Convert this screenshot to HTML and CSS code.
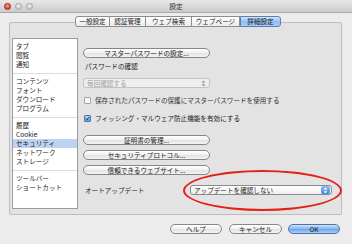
FILE: index.html
```html
<!DOCTYPE html>
<html lang="ja">
<head>
<meta charset="utf-8">
<title>設定</title>
<link rel="stylesheet" href="styles.css">
</head>
<body>
<div class="window">
  <div class="titlebar">
    <div class="lights"><span class="light red"></span><span class="light"></span><span class="light"></span></div>
    <div class="title">設定</div>
    <div></div>
  </div>
  <div class="tabs">
    <span class="tab t1">一般設定</span>
    <span class="tab t2">認証管理</span>
    <span class="tab t3">ウェブ検索</span>
    <span class="tab t4">ウェブページ</span>
    <span class="tab t5 selected">詳細設定</span>
  </div>
  <div class="panel">
    <div class="list">
      <div class="item">タブ</div>
      <div class="item">閲覧</div>
      <div class="item">通知</div>
      <div class="sep"></div>
      <div class="item">コンテンツ</div>
      <div class="item">フォント</div>
      <div class="item">ダウンロード</div>
      <div class="item">プログラム</div>
      <div class="sep"></div>
      <div class="item">履歴</div>
      <div class="item">Cookie</div>
      <div class="item selected">セキュリティ</div>
      <div class="item">ネットワーク</div>
      <div class="item">ストレージ</div>
      <div class="sep"></div>
      <div class="item">ツールバー</div>
      <div class="item">ショートカット</div>
    </div>
    <div class="content">
      <div class="btn wide">マスターパスワードの設定...</div>
      <div class="label l1">パスワードの確認</div>
      <div class="popup disabled">
        <span>毎回確認する</span>
        <svg class="arrows" width="5" height="7" viewBox="0 0 5 7"><path d="M2.5 0.5 L4.5 2.8 H0.5 Z M2.5 6.5 L4.5 4.2 H0.5 Z" fill="#9a9a9a"/></svg>
      </div>
      <div class="check c1"><span class="box"></span><span class="ctext dim">保存されたパスワードの保護にマスターパスワードを使用する</span></div>
      <div class="check c2"><span class="box on"><svg width="7" height="7" viewBox="0 0 7 7"><path d="M1.4 3.6 L2.9 5.3 L5.8 1.2" fill="none" stroke="#1b2a48" stroke-width="1.3"/></svg></span><span class="ctext">フィッシング・マルウェア防止機能を有効にする</span></div>
      <div class="btn wide b1">証明書の管理...</div>
      <div class="btn wide b2">セキュリティプロトコル...</div>
      <div class="btn wide b2">信頼できるウェブサイト...</div>
      <div class="update">
        <div class="label ul">オートアップデート</div>
        <div class="popup active">
          <span>アップデートを確認しない</span>
          <span class="stepper"><svg width="5" height="7" viewBox="0 0 5 7"><path d="M2.5 0.6 L4.4 2.8 H0.6 Z M2.5 6.4 L4.4 4.2 H0.6 Z" fill="#ffffff"/></svg></span>
        </div>
      </div>
    </div>
  </div>
  <div class="footer">
    <div class="btn fb help">ヘルプ</div>
    <div class="btn fb cancel">キャンセル</div>
    <div class="btn fb ok">OK</div>
  </div>
  <div class="annotation"></div>
</div>
</body>
</html>
```

FILE: styles.css
```css
* { box-sizing: border-box; }
html, body { margin: 0; padding: 0; }
body {
  width: 352px;
  height: 244px;
  overflow: hidden;
  background: #ececec;
  font-family: "Noto Sans CJK JP", "Liberation Sans", sans-serif;
  font-size: 6.6px;
  color: #1c1c1c;
}
.window { position: relative; width: 352px; height: 244px; }

.titlebar {
  height: 13px;
  background: linear-gradient(#e8e8e8, #cbcbcb);
  border-bottom: 1px solid #a9a9a9;
  display: grid;
  grid-template-columns: 1fr auto 1fr;
  align-items: center;
}
.lights { display: flex; gap: 4px; padding-left: 4px; }
.light {
  width: 7px; height: 7px; border-radius: 50%;
  background: radial-gradient(circle at 50% 35%, #f2f2f2, #bdbdbd);
  border: 1px solid #a3a3a3;
}
.light.red {
  background: radial-gradient(circle at 50% 35%, #ff9a8f, #d0241b);
  border-color: #a51c14;
}
.title { font-size: 6.8px; color: #333; line-height: 12px; }

.tabs {
  display: flex;
  margin: 3px 0 0 75px;
  height: 11px;
  position: relative;
  z-index: 1;
}
.tab {
  height: 11px;
  line-height: 9px;
  text-align: center;
  border: 1px solid #8d8d8d;
  border-left: none;
  background: linear-gradient(#ffffff, #ececec);
  color: #222;
}
.tab.t1 { width: 35px; border-left: 1px solid #8d8d8d; border-radius: 3px 0 0 3px; }
.tab.t2 { width: 36px; }
.tab.t3 { width: 46px; }
.tab.t4 { width: 48px; }
.tab.t5 { width: 41px; border-radius: 0 3px 3px 0; }
.tab.selected {
  background: linear-gradient(#d3e5fb, #8fbdf1 55%, #a9cdf6);
  border-color: #5a7fb3;
  border-left: 1px solid #5a7fb3;
}

.panel {
  margin: -5px 10px 0 9px;
  height: 193px;
  border: 1px solid #bdbdbd;
  border-radius: 2px;
  background: #e3e3e3;
  display: flex;
  padding: 15px 0 0 2px;
}

.list {
  width: 66px;
  height: 171px;
  background: #fff;
  border: 1px solid #9c9c9c;
  padding-top: 3px;
}
.item {
  height: 9px;
  line-height: 9px;
  padding-left: 3px;
  color: #222;
  white-space: nowrap;
}
.item.selected { background: #bcd3f1; }
.sep { height: 8px; border-top: 1px solid #dcdcdc; margin-top: 4px; height: 4px; }

.content {
  margin-left: 5px;
  padding-top: 10px;
  display: flex;
  flex-direction: column;
  align-items: flex-start;
}
.btn {
  height: 10px;
  line-height: 8px;
  text-align: center;
  border: 1px solid #878787;
  border-radius: 5px;
  background: linear-gradient(#ffffff, #f1f1f1 50%, #e2e2e2 51%, #f4f4f4);
  color: #222;
  white-space: nowrap;
}
.btn.wide { width: 127px; }
.btn.b1 { margin-top: 13px; }
.btn.b2 { margin-top: 5px; }

.label { line-height: 9px; padding-left: 2px; }
.label.l1 { margin-top: 4px; }

.popup {
  height: 10px;
  border: 1px solid #a5a5a5;
  border-radius: 3px;
  display: flex;
  align-items: center;
  justify-content: space-between;
  padding-left: 3px;
  white-space: nowrap;
}
.popup.disabled {
  width: 127px;
  margin-top: 7px;
  background: #eeeeee;
  border-color: #c3c3c3;
  color: #a2a2a2;
  padding-right: 3px;
}
.popup.active {
  width: 142px;
  background: linear-gradient(#ffffff, #efefef);
  border-color: #8a8a8a;
  color: #222;
  padding-right: 0;
  overflow: hidden;
}
.stepper {
  width: 9px;
  height: 8px;
  margin-right: 1px;
  border-radius: 2px;
  background: linear-gradient(#8fc0f3, #3d83d9);
  display: flex;
  align-items: center;
  justify-content: center;
}

.check {
  display: flex;
  align-items: center;
  height: 8px;
  padding-left: 1px;
}
.check.c1 { margin-top: 8px; }
.check.c2 { margin-top: 10px; }
.box {
  width: 7px;
  height: 7px;
  border: 1px solid #a5a5a5;
  border-radius: 1px;
  background: #fbfbfb;
  margin-right: 4px;
  display: flex;
  align-items: center;
  justify-content: center;
}
.box.on {
  background: linear-gradient(#b9d6f7, #5b9ae3);
  border-color: #4a76b0;
}
.box svg { display: block; }
.ctext { white-space: nowrap; }
.ctext.dim { color: #333; }

.update {
  margin-top: 10px;
  display: flex;
  align-items: center;
}
.label.ul { width: 107px; }

.footer {
  display: flex;
  justify-content: flex-end;
  padding-right: 12px;
  margin-top: 9px;
}
.fb { height: 10px; }
.help { width: 52px; }
.cancel { width: 53px; margin-left: 7px; }
.ok {
  width: 52px;
  margin-left: 6px;
  background: linear-gradient(#cfe3fa, #84b6ee 50%, #6aa3e8 51%, #a9d0f8);
  border-color: #4f73a8;
}

.annotation {
  position: absolute;
  left: 183px;
  top: 170px;
  width: 159px;
  height: 41px;
  border: 2px solid #e32119;
  border-radius: 50%;
}
```
